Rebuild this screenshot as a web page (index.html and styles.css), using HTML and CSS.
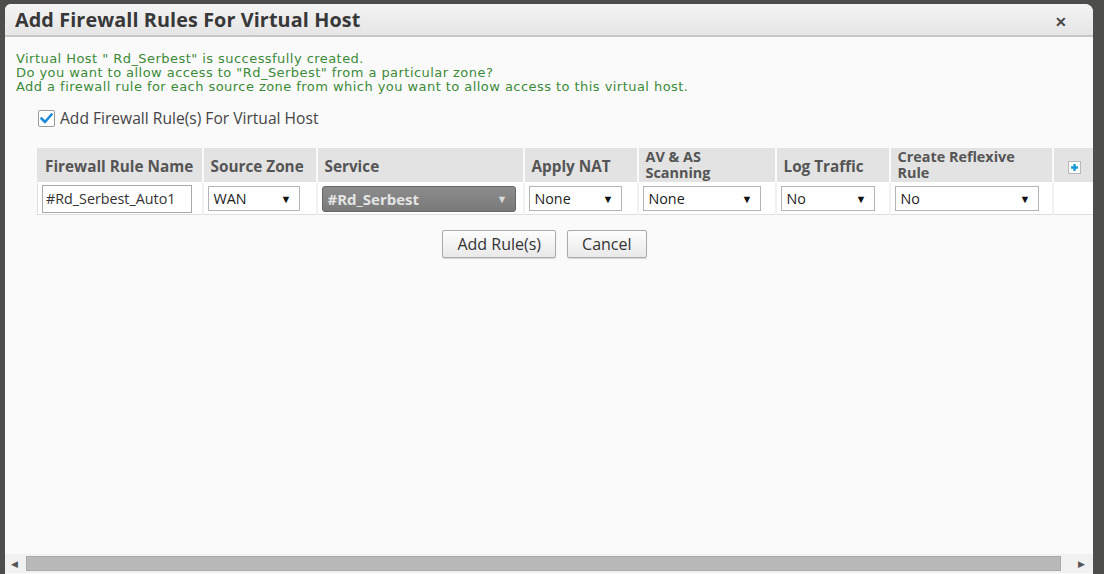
FILE: index.html
```html
<!DOCTYPE html>
<html lang="en">
<head>
    <meta charset="UTF-8">
    <title>Add Firewall Rules For Virtual Host</title>
    <link rel="stylesheet" href="styles.css">
</head>
<body>
    <div class="dialog">
        <div class="titleBar">
            <h1>Add Firewall Rules For Virtual Host</h1>
            <span class="close">&#x2715;</span>
        </div>
        <div class="content">
            <div class="message">
                Virtual Host " Rd_Serbest" is successfully created.<br>
                Do you want to allow access to "Rd_Serbest" from a particular zone?<br>
                Add a firewall rule for each source zone from which you want to allow access to this virtual host.
            </div>
            <label class="check">
                <span class="box">
                    <svg width="13" height="11" viewBox="0 0 13 11"><path d="M1.5 5.5 L5 9 L11.5 1.5" fill="none" stroke="#1e8ad6" stroke-width="2.6" stroke-linecap="round" stroke-linejoin="round"/></svg>
                </span>
                Add Firewall Rule(s) For Virtual Host
            </label>
            <table class="rules">
                <colgroup>
                    <col class="cName">
                    <col class="cZone">
                    <col class="cService">
                    <col class="cNat">
                    <col class="cAv">
                    <col class="cLog">
                    <col class="cRefl">
                    <col class="cAdd">
                </colgroup>
                <tr>
                    <th>Firewall Rule Name</th>
                    <th>Source Zone</th>
                    <th>Service</th>
                    <th>Apply NAT</th>
                    <th class="two">AV &amp; AS<br>Scanning</th>
                    <th>Log Traffic</th>
                    <th class="two">Create Reflexive<br>Rule</th>
                    <th><span class="plus">
                        <svg width="9" height="9" viewBox="0 0 9 9"><path d="M4.5 1 V8 M1 4.5 H8" stroke="#1a9bd7" stroke-width="2.4"/></svg>
                    </span></th>
                </tr>
                <tr>
                    <td><div class="textbox">#Rd_Serbest_Auto1</div></td>
                    <td><div class="select w91">WAN<span class="arrow">&#9660;</span></div></td>
                    <td><div class="select service">#Rd_Serbest<span class="arrow">&#9660;</span></div></td>
                    <td><div class="select w92">None<span class="arrow">&#9660;</span></div></td>
                    <td><div class="select w117">None<span class="arrow">&#9660;</span></div></td>
                    <td><div class="select w93">No<span class="arrow">&#9660;</span></div></td>
                    <td><div class="select w143">No<span class="arrow">&#9660;</span></div></td>
                    <td></td>
                </tr>
            </table>
            <div class="actions">
                <button>Add Rule(s)</button>
                <button>Cancel</button>
            </div>
        </div>
        <div class="hscroll">
            <span class="scrollBtn">&#9664;</span>
            <div class="track"><div class="thumb"></div></div>
            <span class="scrollBtn">&#9654;</span>
        </div>
    </div>
</body>
</html>
```

FILE: styles.css
```css
html, body {
    margin: 0;
    padding: 0;
    height: 100%;
}

body {
    background-color: #4d4d4b;
    font-family: "Open Sans", Arial, sans-serif;
    overflow: hidden;
    padding: 4px 11px 0 5px;
    box-sizing: border-box;
}

.dialog {
    height: 100%;
    background-color: #fafafa;
    border-radius: 6px 8px 0 0;
    display: flex;
    flex-direction: column;
    overflow: hidden;
}

.titleBar {
    height: 31px;
    flex-shrink: 0;
    display: flex;
    align-items: center;
    padding: 0 26px 0 10px;
    background: linear-gradient(#f4f4f4, #e5e5e5);
    border-bottom: 2px solid #c6c6c6;
}

h1 {
    margin: 0;
    font-size: 19.8px;
    font-weight: 700;
    color: #383838;
    letter-spacing: 0.1px;
}

.close {
    margin-left: auto;
    font-size: 14px;
    font-weight: 700;
    color: #444;
    padding-top: 4px;
}

.content {
    flex: 1;
    padding: 15px 0 0 11px;
    overflow: hidden;
}

.message {
    font-family: "DejaVu Sans", sans-serif;
    font-size: 13px;
    line-height: 14px;
    letter-spacing: 0.45px;
    color: #3b8a38;
}

.check {
    display: flex;
    align-items: center;
    gap: 5px;
    margin: 13px 0 0 22px;
    font-size: 15.6px;
    color: #444;
}

.box {
    width: 15px;
    height: 15px;
    border: 1px solid #9a9a9a;
    border-radius: 2px;
    background: #fff;
    display: flex;
    align-items: center;
    justify-content: center;
}

.rules {
    margin: 19px 0 0 21px;
    border-collapse: collapse;
    table-layout: fixed;
    width: 1080px;
    background-color: #fff;
    border: 1px solid #e2e2e2;
}

.cName { width: 165px; }
.cZone { width: 114px; }
.cService { width: 207px; }
.cNat { width: 114px; }
.cAv { width: 138px; }
.cLog { width: 114px; }
.cRefl { width: 163px; }
.cAdd { width: 65px; }

.rules th {
    height: 33px;
    padding: 0 0 0 7px;
    background-color: #e3e3e3;
    border-left: 2px solid #fafafa;
    border-bottom: 1px solid #fff;
    text-align: left;
    font-size: 15.3px;
    font-weight: 700;
    color: #555;
    white-space: nowrap;
}

.rules th.two {
    font-size: 14.4px;
    line-height: 16px;
    vertical-align: top;
    padding-top: 0;
    height: 33px;
}

.rules th:first-child {
    border-left: none;
}

.rules td {
    height: 31px;
    padding: 0 0 0 4px;
    border-left: 2px solid #f1f1f1;
    border-bottom: 1px solid #dedede;
}

.rules td:first-child {
    border-left: none;
}

.plus {
    display: inline-flex;
    width: 11px;
    height: 11px;
    border: 1px solid #b8b8b8;
    background: #fff;
    align-items: center;
    justify-content: center;
    margin-left: 7px;
}

.textbox {
    width: 145px;
    height: 26px;
    border: 1px solid #a9a9a9;
    background: #fff;
    padding-left: 3px;
    line-height: 26px;
    font-size: 14.3px;
    color: #333;
}

.select {
    height: 25px;
    border: 1px solid #b4b4b4;
    background: #fff;
    display: flex;
    align-items: center;
    padding: 0 7px 0 5px;
    font-size: 14.3px;
    color: #222;
    box-sizing: border-box;
}

.select .arrow {
    margin-left: auto;
    font-size: 11px;
    color: #111;
}

.w91 { width: 92px; }
.w92 { width: 93px; }
.w117 { width: 118px; }
.w93 { width: 94px; }
.w143 { width: 144px; }

.select.service {
    width: 194px;
    height: 26px;
    background: linear-gradient(#8c8c8c, #7a7a7a);
    border-color: #666;
    border-radius: 3px;
    color: #e4e4e4;
    font-weight: 700;
    font-size: 15px;
}

.select.service .arrow {
    color: #d8d8d8;
}

.actions {
    display: flex;
    justify-content: center;
    gap: 11px;
    margin-top: 15px;
    padding-right: 20px;
}

button {
    font-family: "Open Sans", Arial, sans-serif;
    font-size: 16px;
    color: #333;
    height: 28px;
    padding: 0 14px;
    background: linear-gradient(#fdfdfd, #e9e9e9);
    border: 1px solid #aaa;
    border-radius: 2px;
    box-shadow: 0 1px 1px rgba(0,0,0,.15);
}

.hscroll {
    height: 19px;
    flex-shrink: 0;
    display: flex;
    align-items: center;
    background-color: #f1f1f1;
    padding: 0 3px 0 0;
    margin-bottom: 1px;
}

.scrollBtn {
    width: 18px;
    text-align: center;
    font-size: 9px;
    color: #555;
}

.track {
    flex: 1;
    margin: 0 3px;
}

.thumb {
    height: 15px;
    width: 1035px;
    background-color: #b9b9b9;
    border: 1px solid #a9a9a9;
    box-sizing: border-box;
}
```
